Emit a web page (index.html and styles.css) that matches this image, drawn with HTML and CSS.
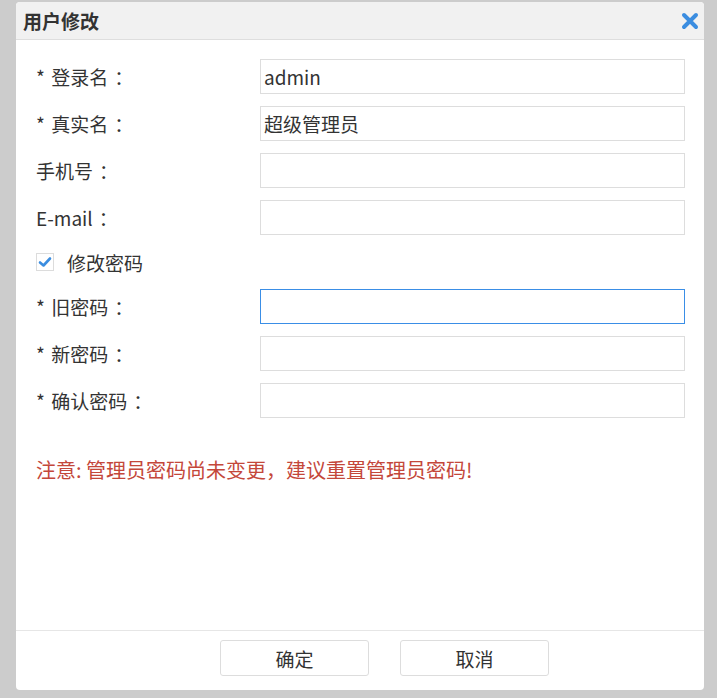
FILE: index.html
```html
<!DOCTYPE html>
<html lang="zh-CN">
<head>
    <meta charset="UTF-8">
    <title>用户修改</title>
    <link rel="stylesheet" href="styles.css">
</head>
<body>

    <div class="dialog">
        <div class="dialog-head">
            <span class="dialog-title">用户修改</span>
            <svg class="close" width="18" height="18" viewBox="0 0 18 18">
                <path d="M3 3 L15 15 M15 3 L3 15" stroke="#3b8de0" stroke-width="4" stroke-linecap="round"/>
            </svg>
        </div>

        <div class="dialog-body">
            <div class="row">
                <label for="loginName">* 登录名<span class="colon">：</span></label>
                <input type="text" id="loginName" value="admin">
            </div>
            <div class="row">
                <label for="realName">* 真实名<span class="colon">：</span></label>
                <input type="text" id="realName" value="超级管理员">
            </div>
            <div class="row">
                <label for="phone">手机号<span class="colon">：</span></label>
                <input type="text" id="phone">
            </div>
            <div class="row">
                <label for="email">E-mail<span class="colon">：</span></label>
                <input type="text" id="email">
            </div>
            <div class="row check-row">
                <span class="checkbox">
                    <svg width="14" height="12" viewBox="0 0 14 12">
                        <path d="M2 6.5 L5.5 9.5 L12 2.5" fill="none" stroke="#3b8de0" stroke-width="2.6" stroke-linecap="round" stroke-linejoin="round"/>
                    </svg>
                </span>
                <span>修改密码</span>
            </div>
            <div class="row">
                <label for="oldPwd">* 旧密码<span class="colon">：</span></label>
                <input type="password" id="oldPwd" class="focus">
            </div>
            <div class="row">
                <label for="newPwd">* 新密码<span class="colon">：</span></label>
                <input type="password" id="newPwd">
            </div>
            <div class="row">
                <label for="confirmPwd">* 确认密码<span class="colon">：</span></label>
                <input type="password" id="confirmPwd">
            </div>

            <p class="warn">注意: 管理员密码尚未变更，建议重置管理员密码!</p>
        </div>

        <div class="dialog-foot">
            <button class="btn">确定</button>
            <button class="btn">取消</button>
        </div>
    </div>

</body>
</html>
```

FILE: styles.css
```css
body {
    margin: 0;
    background-color: #cccccc;
    font-family: "Noto Sans CJK SC", "Noto Sans", sans-serif;
    color: #333;
}
.dialog {
    margin: 2px 0 0 16px;
    width: 688px;
    height: 688px;
    background-color: #fff;
    border-radius: 4px;
    display: flex;
    flex-direction: column;
    overflow: hidden;
}
.dialog-head {
    height: 37px;
    background-color: #f1f1f1;
    border-bottom: 1px solid #dedede;
    display: flex;
    align-items: center;
    justify-content: space-between;
    padding: 0 5px 0 7px;
}
.dialog-title {
    font-size: 19px;
    font-weight: bold;
    color: #333;
}
.close {
    margin-top: 1px;
}
.dialog-body {
    flex: 1;
    padding: 19px 19px 0 20px;
}
.row {
    display: flex;
    align-items: center;
    margin-bottom: 12px;
    font-size: 19px;
}
.row label {
    width: 224px;
    flex: none;
    word-spacing: 2px;
}
.colon {
    margin-left: 6px;
}
.row input {
    flex: 1;
    height: 35px;
    box-sizing: border-box;
    border: 1px solid #dddddd;
    padding: 0 3px;
    font-family: inherit;
    font-size: 19px;
    color: #333;
    outline: none;
}
.row input.focus {
    border-color: #3a8ee6;
}
.check-row {
    height: 30px;
}
.checkbox {
    width: 18px;
    height: 18px;
    box-sizing: border-box;
    border: 1px solid #dcdcdc;
    display: flex;
    align-items: center;
    justify-content: center;
    margin-right: 13px;
}
.warn {
    margin: 37px 0 0 0;
    font-size: 20px;
    color: #c4473a;
}
.dialog-foot {
    height: 60px;
    border-top: 1px solid #e6e6e6;
    display: flex;
    justify-content: center;
    align-items: flex-start;
    gap: 31px;
    padding: 9px 0 0 49px;
    box-sizing: border-box;
}
.btn {
    width: 149px;
    height: 36px;
    background-color: #fff;
    border: 1px solid #dddddd;
    border-radius: 3px;
    font-family: inherit;
    font-size: 19px;
    color: #333;
}
```
